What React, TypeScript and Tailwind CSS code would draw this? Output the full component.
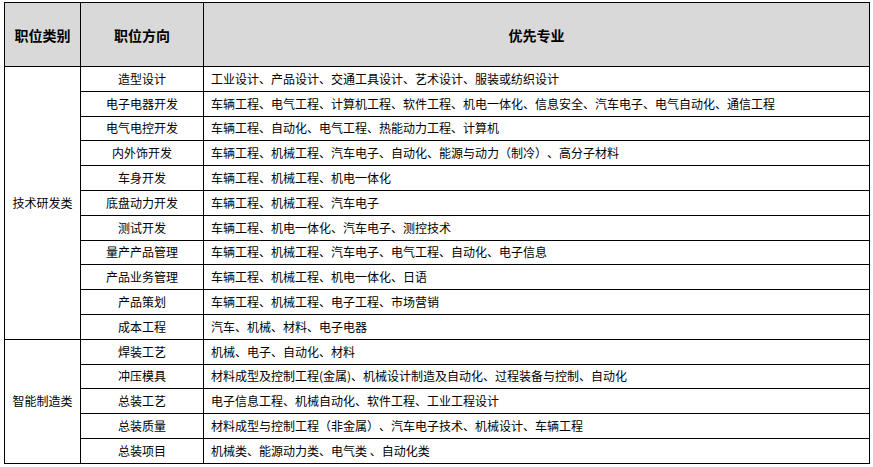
const groups = [
  {
    category: '技术研发类',
    rows: [
      ['造型设计', '工业设计、产品设计、交通工具设计、艺术设计、服装或纺织设计'],
      ['电子电器开发', '车辆工程、电气工程、计算机工程、软件工程、机电一体化、信息安全、汽车电子、电气自动化、通信工程'],
      ['电气电控开发', '车辆工程、自动化、电气工程、热能动力工程、计算机'],
      ['内外饰开发', '车辆工程、机械工程、汽车电子、自动化、能源与动力（制冷）、高分子材料'],
      ['车身开发', '车辆工程、机械工程、机电一体化'],
      ['底盘动力开发', '车辆工程、机械工程、汽车电子'],
      ['测试开发', '车辆工程、机电一体化、汽车电子、测控技术'],
      ['量产产品管理', '车辆工程、机械工程、汽车电子、电气工程、自动化、电子信息'],
      ['产品业务管理', '车辆工程、机械工程、机电一体化、日语'],
      ['产品策划', '车辆工程、机械工程、电子工程、市场营销'],
      ['成本工程', '汽车、机械、材料、电子电器'],
    ],
  },
  {
    category: '智能制造类',
    rows: [
      ['焊装工艺', '机械、电子、自动化、材料'],
      ['冲压模具', '材料成型及控制工程(金属)、机械设计制造及自动化、过程装备与控制、自动化'],
      ['总装工艺', '电子信息工程、机械自动化、软件工程、工业工程设计'],
      ['总装质量', '材料成型与控制工程（非金属）、汽车电子技术、机械设计、车辆工程'],
      ['总装项目', '机械类、能源动力类、电气类 、自动化类'],
    ],
  },
]

export default function App() {
  return (
    <div className="min-h-[467px] bg-white pl-[4px] pt-[2px] text-black [text-spacing-trim:space-all] [font-family:'Microsoft_YaHei','Noto_Sans_CJK_SC',sans-serif]">
      <table className="w-[866px] table-fixed border-collapse text-[12px] leading-none">
        <colgroup>
          <col className="w-[76px]" />
          <col className="w-[123px]" />
          <col />
        </colgroup>
        <thead>
          <tr className="h-[64px] bg-[#d9d9d9] text-[14px] font-bold">
            <th className="border border-black text-center">职位类别</th>
            <th className="border border-black text-center">职位方向</th>
            <th className="border border-black text-center">优先专业</th>
          </tr>
        </thead>
        <tbody>
          {groups.map((g) =>
            g.rows.map(([dir, major], i) => (
              <tr key={g.category + dir} className="h-[24.8px]">
                {i === 0 && (
                  <td rowSpan={g.rows.length} className="border border-black text-center align-middle">
                    {g.category}
                  </td>
                )}
                <td className="border border-black text-center align-middle">{dir}</td>
                <td className="border border-black pl-[7px] align-middle whitespace-nowrap">{major}</td>
              </tr>
            ))
          )}
        </tbody>
      </table>
    </div>
  )
}
